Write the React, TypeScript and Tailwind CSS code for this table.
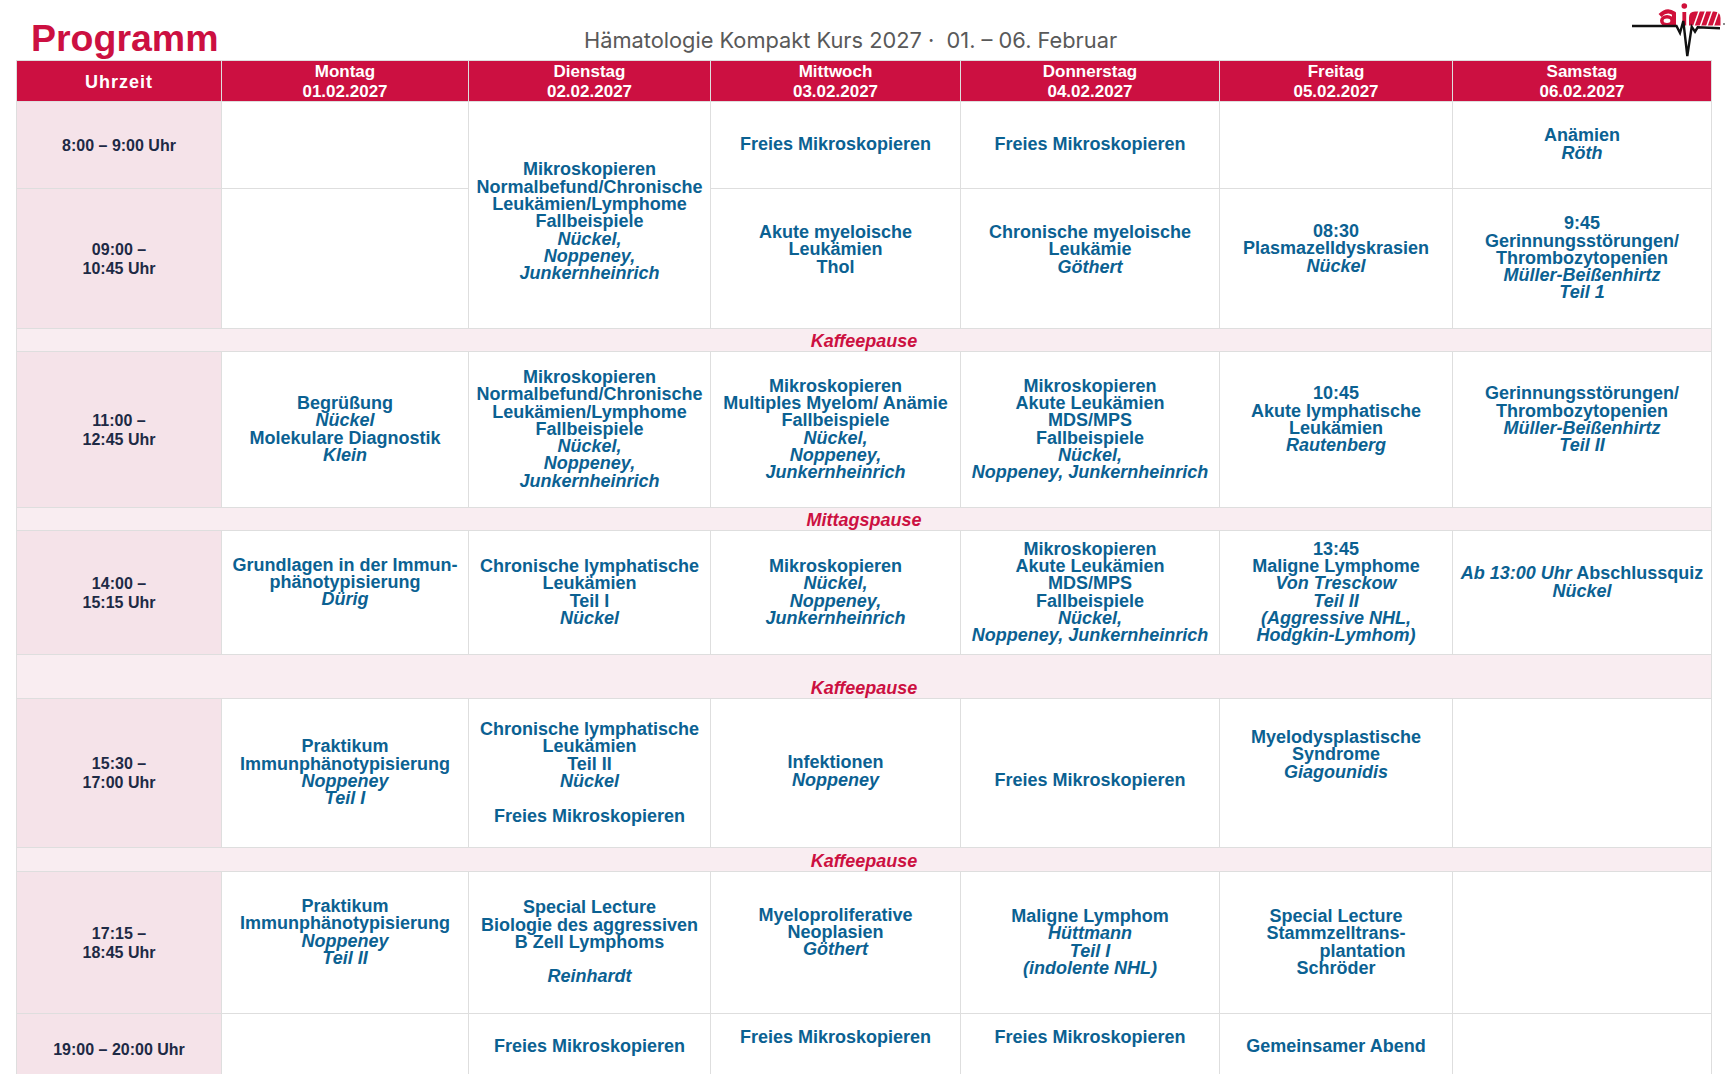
import type { ReactNode } from "react";

type Line = ReactNode;

const it = (s: string) => <i>{s}</i>;

function Cell({ lines = [], cls = "", span = false }: { lines?: Line[]; cls?: string; span?: boolean }) {
  return (
    <div
      className={`flex flex-col items-center justify-center bg-white text-center ${span ? "row-span-2" : ""} ${cls}`}
    >
      {lines.map((l, k) => (
        <div key={k} className="whitespace-nowrap">
          {l === "" ? "\u00a0" : l}
        </div>
      ))}
    </div>
  );
}

function Time({ lines }: { lines: string[] }) {
  return (
    <div className="flex flex-col items-center justify-center bg-[#f5e3e9] text-center text-[16px] leading-[19px] text-[#1d2a45]">
      {lines.map((l) => (
        <div key={l}>{l}</div>
      ))}
    </div>
  );
}

function Pause({ label, bottom = false }: { label: string; bottom?: boolean }) {
  return (
    <div
      className={`col-span-7 flex justify-center bg-[#f9edf1] italic text-[#cc1041] ${
        bottom ? "items-end pb-[1px]" : "items-center pt-[4px]"
      }`}
    >
      {label}
    </div>
  );
}

const days = [
  ["Montag", "01.02.2027"],
  ["Dienstag", "02.02.2027"],
  ["Mittwoch", "03.02.2027"],
  ["Donnerstag", "04.02.2027"],
  ["Freitag", "05.02.2027"],
  ["Samstag", "06.02.2027"],
];

function Logo() {
  return (
    <svg width="105" height="60" viewBox="0 0 105 60">
      <path
        d="M35 15.5 Q42 8.5 49 13.5 L49 25.5"
        fill="none"
        stroke="#d0103a"
        strokeWidth="4"
      />
      <ellipse cx="42" cy="20.8" rx="5.2" ry="4" fill="none" stroke="#d0103a" strokeWidth="3.6" />
      <rect x="57.4" y="12" width="3.8" height="13.5" fill="#d0103a" />
      <circle cx="59.3" cy="6" r="2.8" fill="#d0103a" />
      <path d="M64 25.5 V17.5 Q64 11.5 70 11.5 H89 Q95.5 11.5 95.5 18 V25.5 Z" fill="#d0103a" />
      <line x1="68.5" y1="27" x2="74.5" y2="10" stroke="#fff" strokeWidth="1.5" />
      <line x1="75" y1="27" x2="81" y2="10" stroke="#fff" strokeWidth="1.5" />
      <line x1="81.5" y1="27" x2="87.5" y2="10" stroke="#fff" strokeWidth="1.5" />
      <line x1="88" y1="27" x2="94" y2="10" stroke="#fff" strokeWidth="1.5" />
      <polyline
        points="7,26 51.5,26 55,33 58.3,21 62.3,56 66.7,26.7 70,31.7 72.7,27.3 95,28.3"
        fill="none"
        stroke="#111"
        strokeWidth="2.4"
      />
      <circle cx="99" cy="24" r="1" fill="#666" />
    </svg>
  );
}

export default function App() {
  return (
    <div className="min-h-screen w-full bg-white font-['Liberation_Sans',Arial,sans-serif]">
      {/* Title bar */}
      <div className="flex h-[60px] items-start">
        <div className="w-[584px] shrink-0 pl-[31px]">
          <h1 className="mt-[20px] text-[37.5px] font-bold leading-[37.5px] text-[#cc1041]">Programm</h1>
        </div>
        <div className="mt-[29px] whitespace-nowrap font-['Inter',sans-serif] text-[21.8px] leading-[22px] text-[#595959]">
          Hämatologie Kompakt Kurs 2027 · {"\u00a0"}01. – 06. Februar
        </div>
        <div className="ml-auto pr-[2px]">
          <Logo />
        </div>
      </div>

      {/* Schedule grid */}
      <div className="ml-[16px] grid w-[1696px] grid-cols-[204px_246px_241px_249px_258px_232px_258px] grid-rows-[40px_86px_139px_22px_155px_22px_123px_43px_148px_23px_141px_70px] gap-px bg-[#dedede] p-px text-[18px] font-bold leading-[17.3px] text-[#0b6192]">
        {/* Header */}
        <div className="flex items-center justify-center bg-[#cc1041] pt-[3px] text-[18px] tracking-[1px] text-white">
          Uhrzeit
        </div>
        {days.map(([d, date]) => (
          <div
            key={d}
            className="flex flex-col items-center justify-center bg-[#cc1041] pt-[2px] text-[17px] leading-[20px] text-white"
          >
            <div>{d}</div>
            <div>{date}</div>
          </div>
        ))}

        {/* 8:00 */}
        <Time lines={["8:00 – 9:00 Uhr"]} />
        <Cell />
        <Cell
          span
          cls="pt-[14px]"
          lines={[
            "Mikroskopieren",
            "Normalbefund/Chronische",
            "Leukämien/Lymphome",
            "Fallbeispiele",
            it("Nückel,"),
            it("Noppeney,"),
            it("Junkernheinrich"),
          ]}
        />
        <Cell lines={["Freies Mikroskopieren"]} />
        <Cell lines={["Freies Mikroskopieren"]} />
        <Cell />
        <Cell cls="pb-[1px]" lines={["Anämien", it("Röth")]} />

        {/* 09:00 */}
        <Time lines={["09:00 –", "10:45 Uhr"]} />
        <Cell />
        <Cell cls="pb-[17px]" lines={["Akute myeloische", "Leukämien", "Thol"]} />
        <Cell cls="pb-[17px]" lines={["Chronische myeloische", "Leukämie", it("Göthert")]} />
        <Cell cls="pb-[19px]" lines={["08:30", "Plasmazelldyskrasien", it("Nückel")]} />
        <Cell
          lines={["9:45", "Gerinnungsstörungen/", "Thrombozytopenien", it("Müller-Beißenhirtz"), it("Teil 1")]}
        />

        <Pause label="Kaffeepause" />

        {/* 11:00 */}
        <Time lines={["11:00 –", "12:45 Uhr"]} />
        <Cell lines={["Begrüßung", it("Nückel"), "Molekulare Diagnostik", it("Klein")]} />
        <Cell
          lines={[
            "Mikroskopieren",
            "Normalbefund/Chronische",
            "Leukämien/Lymphome",
            "Fallbeispiele",
            it("Nückel,"),
            it("Noppeney,"),
            it("Junkernheinrich"),
          ]}
        />
        <Cell
          lines={[
            "Mikroskopieren",
            "Multiples Myelom/ Anämie",
            "Fallbeispiele",
            it("Nückel,"),
            it("Noppeney,"),
            it("Junkernheinrich"),
          ]}
        />
        <Cell
          lines={[
            "Mikroskopieren",
            "Akute Leukämien",
            "MDS/MPS",
            "Fallbeispiele",
            it("Nückel,"),
            it("Noppeney, Junkernheinrich"),
          ]}
        />
        <Cell cls="pb-[19px]" lines={["10:45", "Akute lymphatische", "Leukämien", it("Rautenberg")]} />
        <Cell
          cls="pb-[19px]"
          lines={["Gerinnungsstörungen/", "Thrombozytopenien", it("Müller-Beißenhirtz"), it("Teil II")]}
        />

        <Pause label="Mittagspause" />

        {/* 14:00 */}
        <Time lines={["14:00 –", "15:15 Uhr"]} />
        <Cell cls="pb-[20px]" lines={["Grundlagen in der Immun-", "phänotypisierung", it("Dürig")]} />
        <Cell lines={["Chronische lymphatische", "Leukämien", "Teil I", it("Nückel")]} />
        <Cell lines={["Mikroskopieren", it("Nückel,"), it("Noppeney,"), it("Junkernheinrich")]} />
        <Cell
          lines={[
            "Mikroskopieren",
            "Akute Leukämien",
            "MDS/MPS",
            "Fallbeispiele",
            it("Nückel,"),
            it("Noppeney, Junkernheinrich"),
          ]}
        />
        <Cell
          lines={[
            "13:45",
            "Maligne Lymphome",
            it("Von Tresckow"),
            it("Teil II"),
            it("(Aggressive NHL,"),
            it("Hodgkin-Lymhom)"),
          ]}
        />
        <Cell
          cls="pb-[20px]"
          lines={[
            <>
              <i>Ab 13:00 Uhr</i> Abschlussquiz
            </>,
            it("Nückel"),
          ]}
        />

        <Pause label="Kaffeepause" bottom />

        {/* 15:30 */}
        <Time lines={["15:30 –", "17:00 Uhr"]} />
        <Cell lines={["Praktikum", "Immunphänotypisierung", it("Noppeney"), it("Teil I")]} />
        <Cell
          lines={["Chronische lymphatische", "Leukämien", "Teil II", it("Nückel"), "", "Freies Mikroskopieren"]}
        />
        <Cell cls="pb-[3px]" lines={["Infektionen", it("Noppeney")]} />
        <Cell cls="pt-[15px]" lines={["Freies Mikroskopieren"]} />
        <Cell cls="pb-[36px]" lines={["Myelodysplastische", "Syndrome", it("Giagounidis")]} />
        <Cell />

        <Pause label="Kaffeepause" />

        {/* 17:15 */}
        <Time lines={["17:15 –", "18:45 Uhr"]} />
        <Cell cls="pb-[20px]" lines={["Praktikum", "Immunphänotypisierung", it("Noppeney"), it("Teil II")]} />
        <Cell lines={["Special Lecture", "Biologie des aggressiven", "B Zell Lymphoms", "", it("Reinhardt")]} />
        <Cell cls="pb-[20px]" lines={["Myeloproliferative", "Neoplasien", it("Göthert")]} />
        <Cell lines={["Maligne Lymphom", it("Hüttmann"), it("Teil I"), it("(indolente NHL)")]} />
        <div className="flex flex-col items-center justify-center bg-white text-center">
          <div>Special Lecture</div>
          <div className="flex flex-col items-end">
            <div>Stammzelltrans-</div>
            <div>plantation</div>
          </div>
          <div>Schröder</div>
        </div>
        <Cell />

        {/* 19:00 */}
        <Time lines={["19:00 – 20:00 Uhr"]} />
        <Cell />
        <Cell cls="pb-[4px]" lines={["Freies Mikroskopieren"]} />
        <Cell cls="pb-[22px]" lines={["Freies Mikroskopieren"]} />
        <Cell cls="pb-[22px]" lines={["Freies Mikroskopieren"]} />
        <Cell cls="pb-[4px]" lines={["Gemeinsamer Abend"]} />
        <Cell />
      </div>
    </div>
  );
}
